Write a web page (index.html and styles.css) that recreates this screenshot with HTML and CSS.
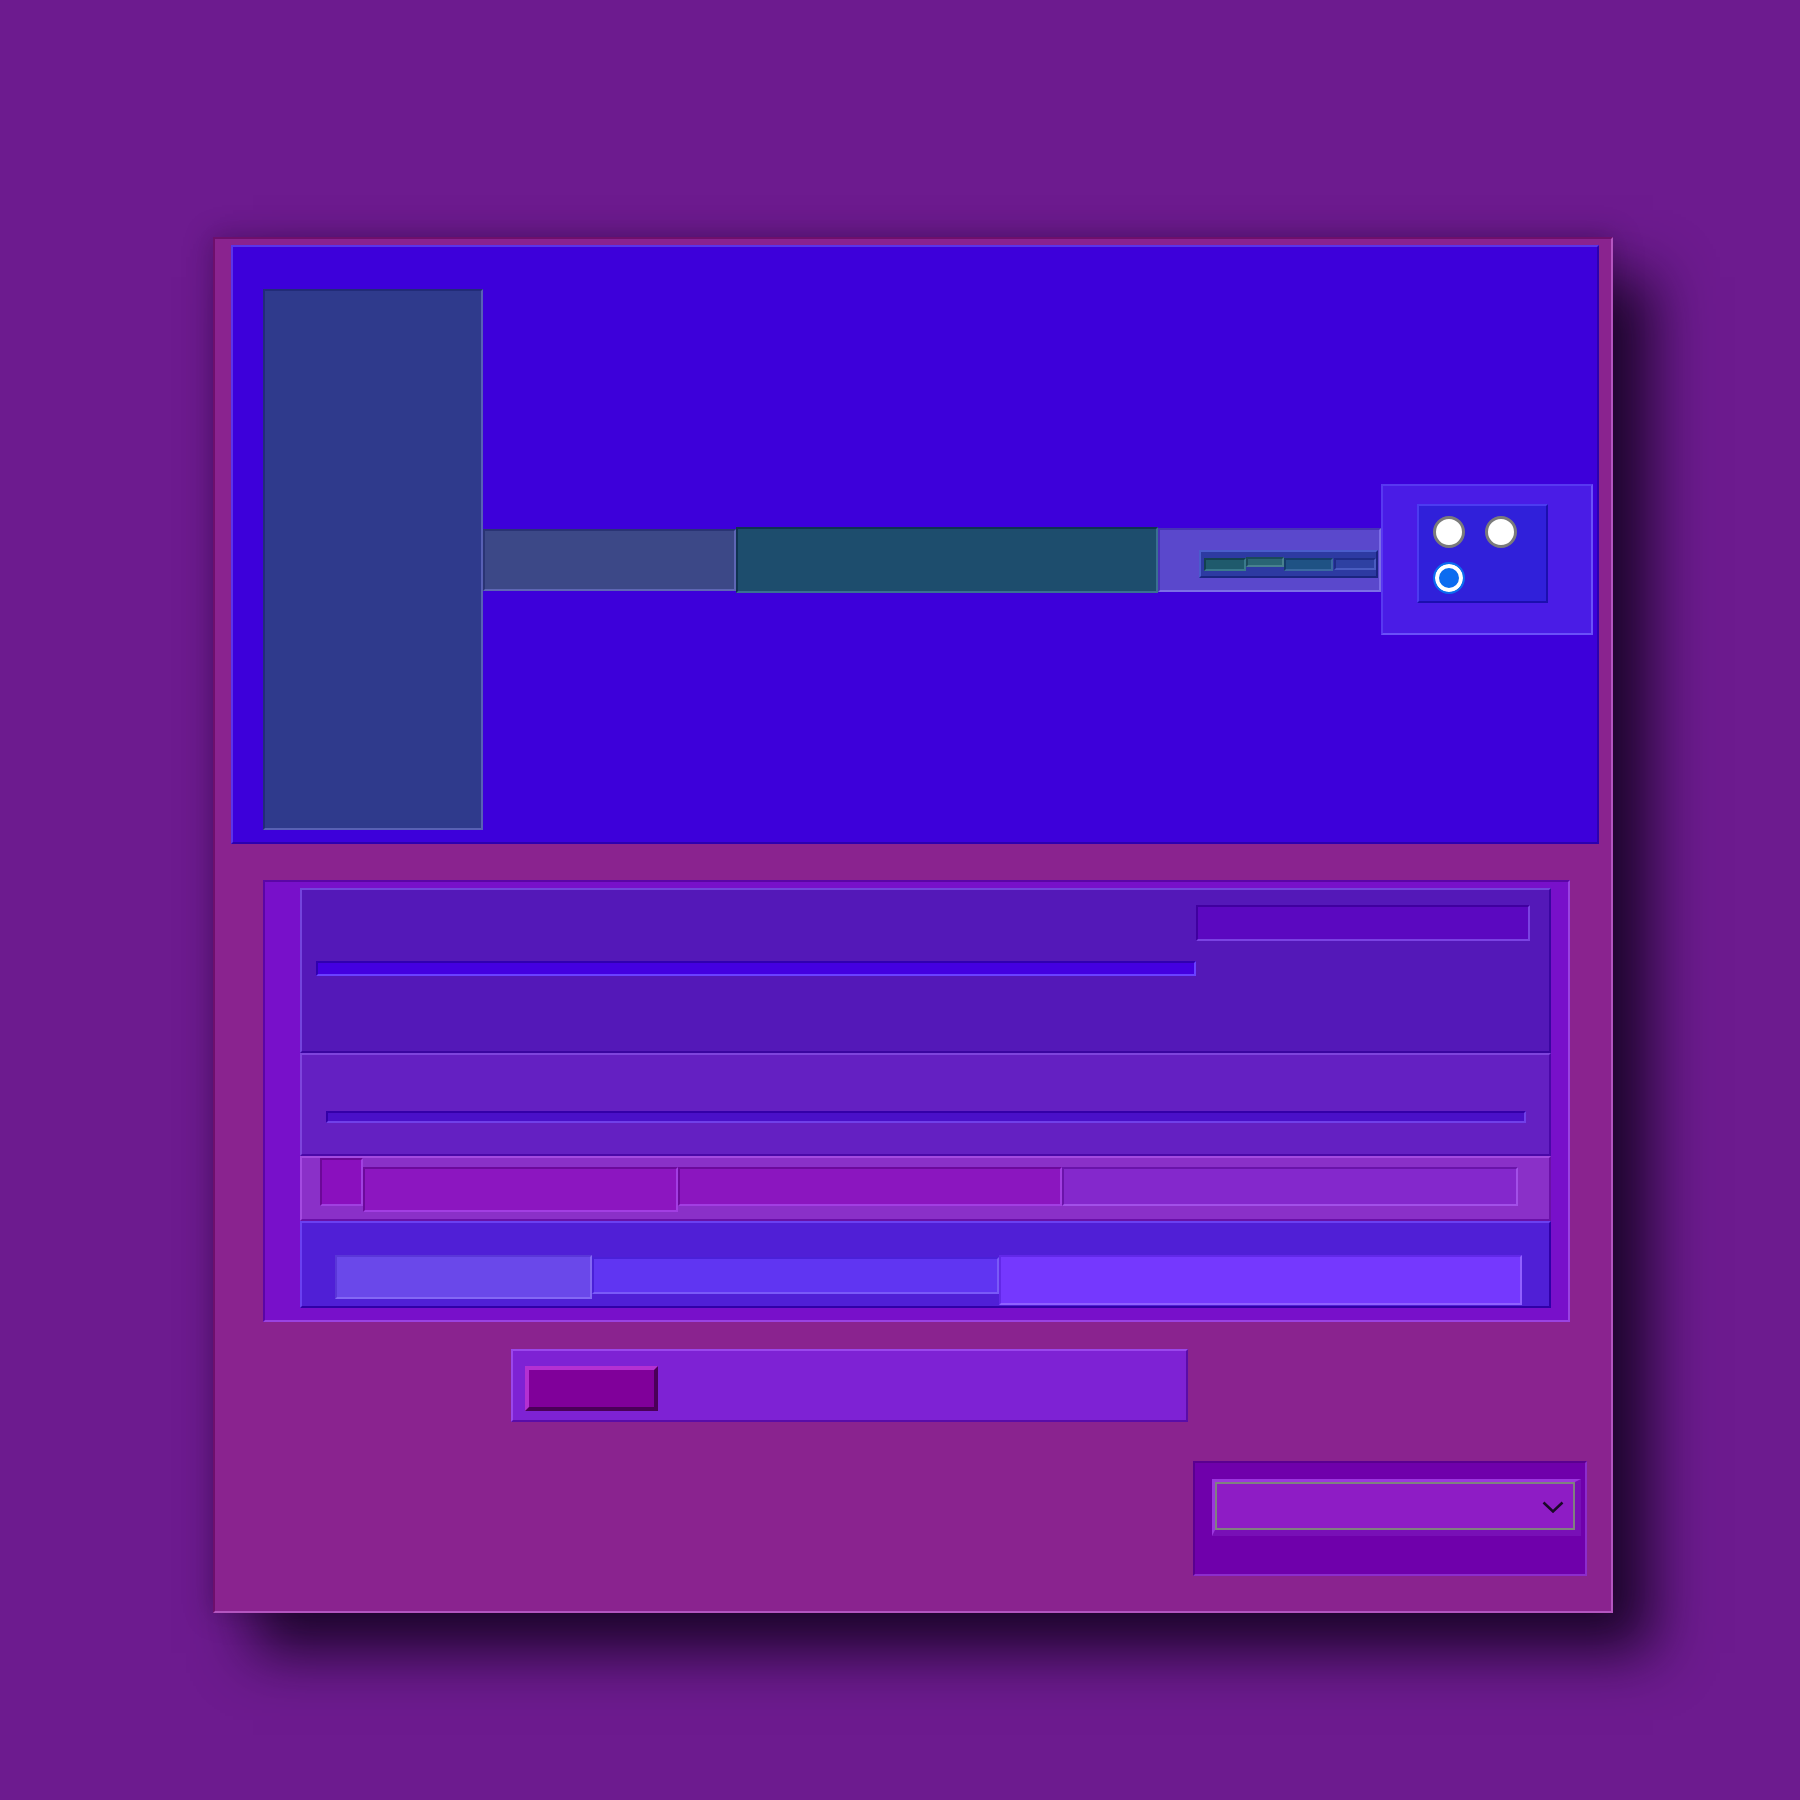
FILE: index.html
```html
<!DOCTYPE html>
<html lang="en">
<head>
<meta charset="utf-8">
<title>Panel</title>
<link rel="stylesheet" href="styles.css">
</head>
<body>
<div class="frame">
  <section class="stage">
    <div class="tall"></div>
    <div class="strip strip-slate"></div>
    <div class="strip strip-teal"></div>
    <div class="strip strip-lilac">
      <div class="meter">
        <span class="seg seg1"></span>
        <span class="seg seg2"></span>
        <span class="seg seg3"></span>
        <span class="seg seg4"></span>
      </div>
    </div>
    <div class="radio-card">
      <div class="radio-grid">
        <input type="radio" name="opt" class="radio" aria-label="Option 1">
        <input type="radio" name="opt" class="radio" aria-label="Option 2">
        <input type="radio" name="opt" class="radio" aria-label="Option 3" checked>
      </div>
    </div>
  </section>
  <section class="lists">
    <div class="list">
      <div class="row row-a">
        <div class="field-top"></div>
        <div class="track-a"></div>
      </div>
      <div class="row row-b"><div class="track-b"></div></div>
      <div class="row row-c">
        <div class="chip"></div>
        <div class="cell cell-1"></div>
        <div class="cell cell-2"></div>
        <div class="cell cell-3"></div>
      </div>
      <div class="row row-d">
        <div class="tile tile-1"></div>
        <div class="tile tile-2"></div>
        <div class="tile tile-3"></div>
      </div>
    </div>
  </section>
  <div class="toolbar"><button class="btn" type="button" aria-label="Action"></button></div>
  <div class="picker">
    <div class="select-wrap">
      <select class="select" aria-label="Choose"></select>
      <svg class="chev" width="22" height="12" viewBox="0 0 22 12" aria-hidden="true"><path d="M1.5 1.5 L11 10.5 L20.5 1.5"/></svg>
    </div>
  </div>
</div>
</body>
</html>
```

FILE: styles.css
```css
* { box-sizing: border-box; }

html, body {
  margin: 0;
  background: #6d1b8f;
  font-family: "Liberation Sans", Arial, sans-serif;
}

body {
  width: 1800px;
  height: 1800px;
  padding: 237px 0 0 213px;
}

.frame {
  width: 1400px;
  height: 1376px;
  background: #8a238f;
  border: 2px solid;
  border-color: #6e0f6c #b455c0 #b455c0 #6e0f6c;
  padding: 6px 0 0 16px;
  box-shadow: 0 0 26px rgba(30, 0, 40, 0.35), 40px 40px 55px rgba(10, 0, 20, 0.78);
}

/* ---------- top blue stage ---------- */
.stage {
  width: 1368px;
  height: 599px;
  background: #3d00da;
  border: 2px solid;
  border-color: #5a34ea #2c00b0 #2c00b0 #5a34ea;
  display: flex;
  align-items: center;
  padding: 42px 0 12px 30px;
}

.tall {
  width: 220px;
  height: 541px;
  background: #2f3a8c;
  border: 2px solid;
  border-color: #222c78 #5860b4 #5860b4 #222c78;
}

.strip { border: 2px solid; flex: none; }

.strip-slate {
  width: 253px;
  height: 62px;
  background: #3c4887;
  border-color: #2a3474 #5e66b4 #5e66b4 #2a3474;
}

.strip-teal {
  width: 422px;
  height: 66px;
  background: #1d4d6d;
  border-color: #0f3350 #3a7092 #3a7092 #0f3350;
}

.strip-lilac {
  width: 223px;
  height: 64px;
  background: #5a48cc;
  border-color: #4634b4 #7c6ee6 #7c6ee6 #4634b4;
  display: flex;
  justify-content: flex-end;
  align-items: flex-start;
  padding: 20px 1px 0 0;
}

.meter {
  width: 179px;
  height: 28px;
  background: #2d3aa2;
  border: 2px solid;
  border-color: #4a5ccc #1a2480 #1a2480 #4a5ccc;
  display: flex;
  align-items: flex-start;
  padding: 6px 0 0 3px;
}

.seg {
  display: block;
  height: 13px;
  border: 2px solid;
}
.seg1 { width: 42px; background: #1f5a6c; border-color: #134050 #3a7a8c #3a7a8c #134050; }
.seg2 { width: 38px; height: 10px; margin-top: -1px; background: #2a6474; border-color: #1a4a5a #48808e #48808e #1a4a5a; }
.seg3 { width: 49px; background: #1f5284; border-color: #143c6a #3a6aa0 #3a6aa0 #143c6a; }
.seg4 { width: 42px; height: 12px; margin-left: 1px; background: #2e40a2; border-color: #1e2c86 #4a5cc0 #4a5cc0 #1e2c86; }

.radio-card {
  width: 212px;
  height: 151px;
  flex: none;
  background: #4a1ce6;
  border: 2px solid;
  border-color: #5838f0 #6a50f8 #6a50f8 #5838f0;
  padding: 18px 0 0 34px;
}

.radio-grid {
  width: 131px;
  height: 99px;
  background: #3020da;
  border: 2px solid;
  border-color: #4c3cf0 #1c0fb0 #1c0fb0 #4c3cf0;
  display: grid;
  grid-template-columns: 32px 32px;
  grid-auto-rows: 32px;
  column-gap: 20px;
  row-gap: 14px;
  align-content: start;
  padding: 10px 0 0 14px;
}

.radio {
  -webkit-appearance: none;
  appearance: none;
  width: 32px;
  height: 32px;
  margin: 0;
  border-radius: 50%;
  background: #ffffff;
  border: 3px solid #7b7b7b;
}

.radio:checked {
  border: 2px solid #0b6cf0;
  background: #0b6cf0;
  box-shadow: inset 0 0 0 4px #ffffff;
}

/* ---------- lower list panel ---------- */
.lists {
  width: 1307px;
  height: 442px;
  margin: 36px 0 0 32px;
  background: #7810ca;
  border: 2px solid;
  border-color: #5a06a6 #9a42e2 #9a42e2 #5a06a6;
  padding: 6px 0 0 35px;
}

.list { width: 1251px; }

.row { border: 2px solid; }

.row-a {
  height: 165px;
  background: #5418b8;
  border-color: #7444dc #3a06a0 #3a06a0 #7444dc;
  display: grid;
  grid-template-columns: 880px 334px;
  row-gap: 20px;
  align-content: start;
  padding: 15px 0 0 14px;
}

.field-top {
  grid-column: 2;
  grid-row: 1;
  height: 36px;
  background: #5b08c0;
  border: 2px solid;
  border-color: #4000a0 #7a42e2 #7a42e2 #4000a0;
}

.track-a {
  grid-column: 1;
  grid-row: 2;
  height: 15px;
  background: #4400e0;
  border: 2px solid;
  border-color: #3000b0 #6a40ff #6a40ff #3000b0;
}

.row-b {
  height: 103px;
  background: #6420c2;
  border-color: #7e44dc #4a08a8 #4a08a8 #7e44dc;
  padding: 56px 0 0 24px;
}

.track-b {
  width: 1200px;
  height: 12px;
  background: #4a10c8;
  border: 2px solid;
  border-color: #3400a8 #7040e8 #7040e8 #3400a8;
}

.row-c {
  height: 65px;
  background: #8a30c8;
  border-color: #a34ae0 #6a10a8 #6a10a8 #a34ae0;
  display: flex;
  align-items: flex-start;
  padding: 0 0 0 18px;
}

.chip {
  width: 43px;
  height: 48px;
  background: #8a10be;
  border: 2px solid;
  border-color: #6c0898 #a040e0 #a040e0 #6c0898;
}

.cell {
  margin-top: 9px;
  height: 39px;
  border: 2px solid;
}
.cell-1 { width: 315px; height: 45px; background: #8c16c0; border-color: #6c0a9c #a23ee2 #a23ee2 #6c0a9c; }
.cell-2 { width: 384px; background: #8b16bf; border-color: #6c0a9c #a23ee2 #a23ee2 #6c0a9c; }
.cell-3 { width: 456px; background: #8428cc; border-color: #6a14aa #a250e8 #a250e8 #6a14aa; }

.row-d {
  height: 87px;
  background: #501fd6;
  border-color: #6a40f0 #3000a8 #3000a8 #6a40f0;
  display: flex;
  align-items: flex-start;
  padding: 32px 0 0 33px;
}

.tile { border: 2px solid; }
.tile-1 { width: 257px; height: 44px; background: #6a48ea; border-color: #5a36d8 #8468f4 #8468f4 #5a36d8; }
.tile-2 { width: 407px; height: 37px; margin-top: 2px; background: #6035f2; border-color: #4a20d8 #7a5af8 #7a5af8 #4a20d8; }
.tile-3 { width: 523px; height: 50px; background: #7538fe; border-color: #6228e8 #9060ff #9060ff #6228e8; }

/* ---------- toolbar ---------- */
.toolbar {
  width: 677px;
  height: 73px;
  margin: 27px 0 0 280px;
  background: #7e22d4;
  border: 2px solid;
  border-color: #9a46ec #5a0ca8 #5a0ca8 #9a46ec;
  padding: 15px 0 0 12px;
}

.btn {
  display: block;
  width: 133px;
  height: 45px;
  padding: 0;
  margin: 0;
  background: #80009a;
  border: 4px solid;
  border-color: #b430d2 #4a0058 #4a0058 #b430d2;
}

/* ---------- picker ---------- */
.picker {
  width: 394px;
  height: 115px;
  margin: 39px 0 0 962px;
  background: #6f00ab;
  border: 2px solid;
  border-color: #5a0090 #8c2ccc #8c2ccc #5a0090;
  padding: 16px 0 0 17px;
}

.select-wrap {
  position: relative;
  width: 369px;
  height: 57px;
  background: #8418c2;
  border-style: solid;
  border-width: 3px 6px 6px 3px;
  border-color: #9c36de #7810b6 #7810b6 #9c36de;
}

.select {
  -webkit-appearance: none;
  appearance: none;
  display: block;
  width: 360px;
  height: 48px;
  margin: 0;
  background: #8e1cc5;
  border: 2px solid #808080;
  border-radius: 0;
}

.chev {
  position: absolute;
  top: 19px;
  right: 11px;
  fill: none;
  stroke: #1a0828;
  stroke-width: 2.5;
}
```
